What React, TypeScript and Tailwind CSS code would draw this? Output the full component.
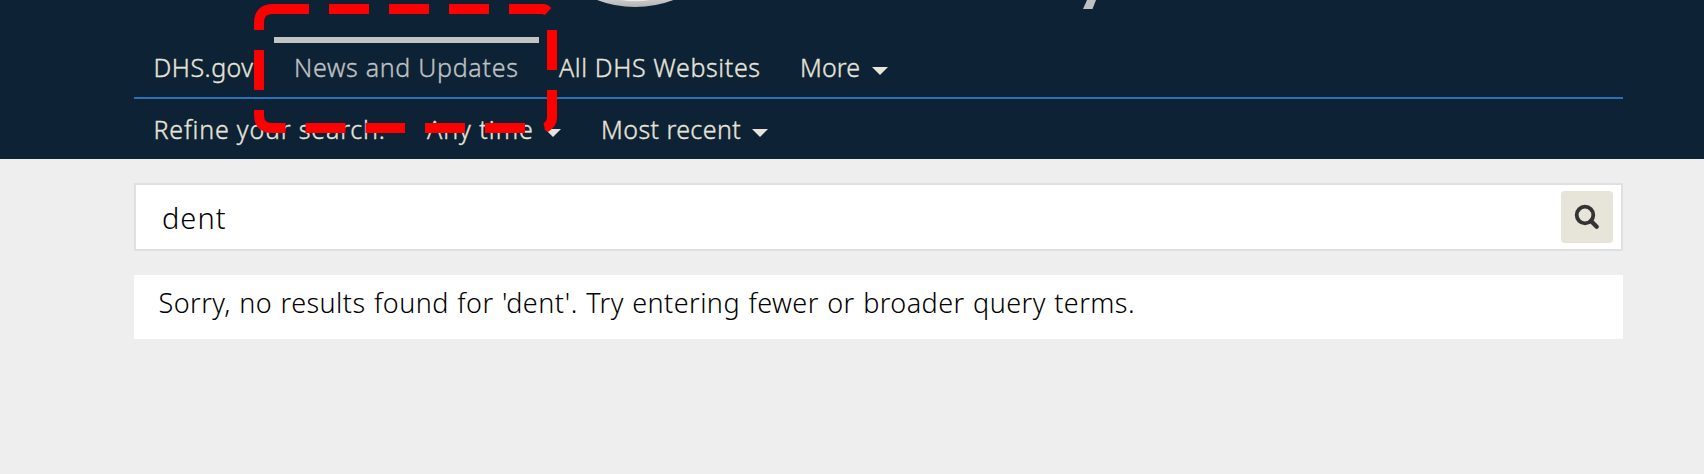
function Caret({ className = "" }: { className?: string }) {
  return (
    <svg className={`h-2 w-4 shrink-0 ${className}`} viewBox="0 0 16 8" fill="#e7e5da">
      <path d="M0 0H16L8 8Z" />
    </svg>
  );
}

function LogoEdge() {
  return (
    <svg className="absolute top-0 left-[590px] h-3 w-[520px]" viewBox="590 0 520 12">
      <defs>
        <linearGradient id="seal" x1="0" y1="0" x2="0" y2="1">
          <stop offset="0" stopColor="#c9c9ca" />
          <stop offset="1" stopColor="#b3b4b6" />
        </linearGradient>
      </defs>
      <path d="M597 0Q615 7 635 7Q655 7 673.500 0Z" fill="url(#seal)" />
      <path d="M621 0Q635 2.500 650 0Z" fill="#ececec" />
      <path d="M1087 0H1096L1092.500 9H1083Z" fill="#bfc0c1" />
    </svg>
  );
}

function Highlight() {
  return (
    <svg
      className="absolute top-0 left-[250px] h-[140px] w-[320px]"
      viewBox="250 0 320 140"
      fill="none"
      stroke="#ff0000"
      strokeWidth="10"
    >
      <path d="M259 30V23Q259 9 273 9H309" />
      <path d="M329 9H369M389 9H429M449 9H489" />
      <path d="M509 4H543Q548 4 551.300 8L545 15L542 14H509Z" fill="#ff0000" stroke="none" />
      <path d="M259 50V90" />
      <path d="M259 110V115Q259 128 272 128H285.500" />
      <path d="M305.500 128H345.500M365.500 128H405M425 128H465M485 128H525" />
      <path d="M552 30V70" />
      <path d="M547 90H557V118Q557 126 548 132L545 130L543.500 123Q547 121 547 117Z" fill="#ff0000" stroke="none" />
    </svg>
  );
}

export default function App() {
  return (
    <div className="relative min-h-[474px] overflow-hidden bg-[#eeeeee] font-['Noto_Sans',sans-serif] font-light text-black">
      <header className="h-[159px] bg-[#0e2235] pr-[81px] pl-[134px] text-[25px] leading-[34px] whitespace-nowrap text-[#e7e5da] [-webkit-text-stroke:0.35px_currentColor]">
        <nav className="flex h-[99px] items-end border-b-2 border-[#2672b8]">
          <a className="flex h-[60px] w-[140px] items-start pt-[13px] pl-[19.500px] tracking-[0.5px]">DHS.gov</a>
          <a className="flex h-[60px] w-[265px] items-start border-t-6 border-[#c2c4c5] pt-[7px] pl-5 tracking-[0.7px] text-[#bfc1c3]">
            News and Updates
          </a>
          <a className="flex h-[60px] w-[242px] items-start pt-[13px] pl-5 tracking-[0.62px]">All DHS Websites</a>
          <a className="flex h-[60px] items-start pt-[13px] pl-[19px] tracking-[0.1px]">
            <span className="w-[71.500px]">More</span>
            <Caret className="mt-[17px]" />
          </a>
        </nav>
        <div className="flex pt-[13px]">
          <span className="w-[293px] pl-[19.500px] tracking-[0.83px]">Refine your search:</span>
          <span className="flex w-[174px]">
            <span className="w-[118px] tracking-[1px]">Any time</span>
            <Caret className="mt-[17px]" />
          </span>
          <span className="flex">
            <span className="w-[151px] tracking-[0.42px]">Most recent</span>
            <Caret className="mt-[17px]" />
          </span>
        </div>
      </header>
      <main className="pt-6 pr-[81px] pl-[134px]">
        <form className="flex h-[68px] items-center justify-between border-2 border-[#e0e0e0] bg-white pr-2 pl-[26px]">
          <span className="pt-0.5 text-[29px] leading-10 tracking-[1px]">dent</span>
          <button
            type="button"
            aria-label="Search"
            className="flex size-[52px] items-center justify-center rounded bg-[#e7e5da]"
          >
            <svg className="size-[26px]" viewBox="0 0 26 26" fill="none" stroke="#333333">
              <circle cx="11" cy="11" r="8.300" strokeWidth="3.800" />
              <path d="M17 17L22.700 22.700" strokeWidth="4.400" strokeLinecap="round" />
            </svg>
          </button>
        </form>
        <p className="mt-6 h-16 bg-white pt-2.5 pl-[24.500px] text-[27px] leading-9 tracking-[0.44px] [word-spacing:1px] whitespace-nowrap">
          Sorry, no results found for 'dent'. Try entering fewer or broader query terms.
        </p>
      </main>
      <LogoEdge />
      <Highlight />
    </div>
  );
}
